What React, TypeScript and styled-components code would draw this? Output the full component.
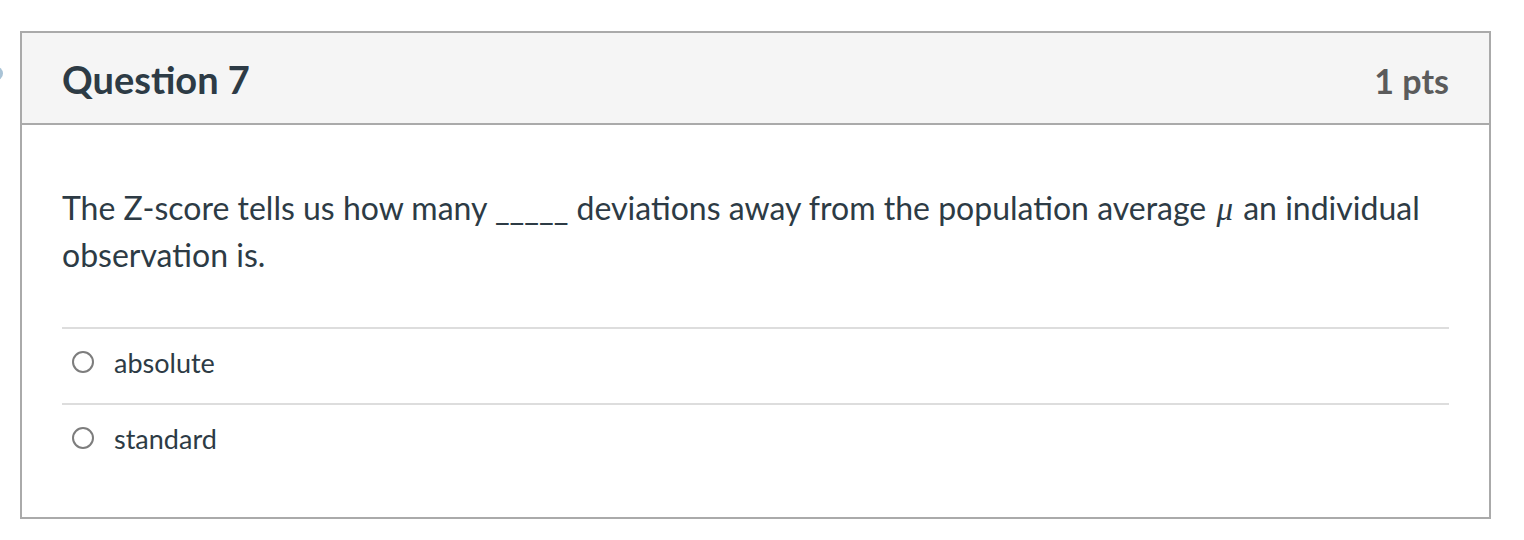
import React from "react";
import styled, { createGlobalStyle } from "styled-components";

const GlobalStyle = createGlobalStyle`
  html, body {
    margin: 0;
    padding: 0;
    background: #ffffff;
    font-family: Lato, "Noto Sans", sans-serif;
    color: #2d3b45;
  }
`;

const Page = styled.div`
  position: relative;
  width: 1524px;
  height: 540px;
  padding: 31px 0 0 20px;
  box-sizing: border-box;
`;

const Marker = styled.div`
  position: absolute;
  left: -13px;
  top: 66px;
  width: 16px;
  height: 15px;
  border-radius: 50%;
  background: #a9c3d6;
`;

const Card = styled.section`
  width: 1471px;
  border: 2px solid #aaaaaa;
  box-sizing: border-box;
  background: #ffffff;
`;

const Header = styled.header`
  display: flex;
  justify-content: space-between;
  align-items: baseline;
  height: 92px;
  box-sizing: border-box;
  padding: 24px 40px 0 40px;
  background: #f5f5f5;
  border-bottom: 2px solid #aaaaaa;
`;

const Title = styled.h2`
  margin: 0;
  font-size: 38px;
  line-height: 1.2;
  font-weight: 700;
  color: #2d3b45;
`;

const Points = styled.span`
  font-size: 34px;
  line-height: 1.2;
  font-weight: 700;
  color: #5b5b5b;
`;

const Body = styled.div`
  padding: 59px 40px 38px 40px;
`;

const Prompt = styled.p`
  margin: 0 0 49px 0;
  font-size: 32px;
  line-height: 47px;
  color: #2d3b45;
`;

const Mu = styled.span`
  font-family: "Liberation Serif", "DejaVu Serif", serif;
  font-style: italic;
  font-size: 33px;
  line-height: 1;
  padding: 0 2px;
`;

const Answers = styled.ul`
  list-style: none;
  margin: 0;
  padding: 0;
`;

const Answer = styled.li`
  display: flex;
  align-items: center;
  gap: 20px;
  height: 66px;
  padding: 0 0 8px 10px;
  border-top: 2px solid #dddddd;
`;

const Radio = styled.span`
  width: 22px;
  height: 22px;
  border: 2px solid #7d7d7d;
  border-radius: 50%;
  box-sizing: border-box;
  flex-shrink: 0;
`;

const AnswerText = styled.span`
  font-size: 27px;
  color: #2d3b45;
`;

const answers = ["absolute", "standard"];

function App() {
  return (
    <Page>
      <GlobalStyle />
      <Marker />
      <Card>
        <Header>
          <Title>Question 7</Title>
          <Points>1 pts</Points>
        </Header>
        <Body>
          <Prompt>
            The Z-score tells us how many _____ deviations away from the
            population average <Mu>μ</Mu> an individual observation is.
          </Prompt>
          <Answers>
            {answers.map((a) => (
              <Answer key={a}>
                <Radio />
                <AnswerText>{a}</AnswerText>
              </Answer>
            ))}
          </Answers>
        </Body>
      </Card>
    </Page>
  );
}

export default App;
